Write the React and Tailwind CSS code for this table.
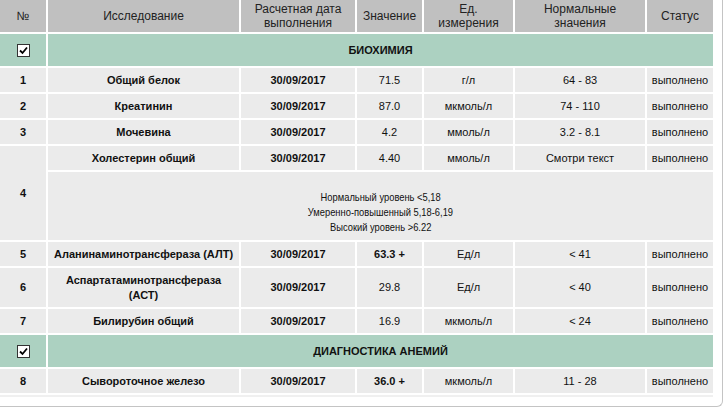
const rows = [
  { n: "1", name: "Общий белок", date: "30/09/2017", value: "71.5", unit: "г/л", norm: "64 - 83" },
  { n: "2", name: "Креатинин", date: "30/09/2017", value: "87.0", unit: "мкмоль/л", norm: "74 - 110" },
  { n: "3", name: "Мочевина", date: "30/09/2017", value: "4.2", unit: "ммоль/л", norm: "3.2 - 8.1" },
];

const rowsAfter = [
  { n: "5", name: "Аланинаминотрансфераза (АЛТ)", date: "30/09/2017", value: "63.3 +", unit: "Ед/л", norm: "< 41", hi: true },
  { n: "6", name: "Аспартатаминотрансфераза (АСТ)", date: "30/09/2017", value: "29.8", unit: "Ед/л", norm: "< 40", tall: true },
  { n: "7", name: "Билирубин общий", date: "30/09/2017", value: "16.9", unit: "мкмоль/л", norm: "< 24" },
];

const cell = "flex items-center justify-center text-center bg-[#ebebeb] text-[11px] text-[#111]";

function Check() {
  return (
    <span className="flex h-[13px] w-[13px] items-center justify-center border border-[#333] bg-white">
      <svg width="9" height="9" viewBox="0 0 9 9">
        <path d="M1 4.5 L3.5 7 L8 1.5" fill="none" stroke="#000" strokeWidth="1.8" />
      </svg>
    </span>
  );
}

function GroupRow({ title }) {
  return (
    <>
      <div className="flex h-[32px] items-center justify-center bg-[#acd1c1]">
        <Check />
      </div>
      <div className="col-span-6 flex items-center justify-center bg-[#acd1c1] text-[11px] font-bold text-[#111]">
        {title}
      </div>
    </>
  );
}

function DataRow({ r }) {
  const h = r.tall ? "h-[39px]" : "h-[24px]";
  return (
    <>
      <div className={`${cell} ${h} font-bold`}>{r.n}</div>
      <div className={`${cell} font-bold px-[6px] leading-[15px] ${r.tall ? "" : "whitespace-nowrap"}`}>{r.name}</div>
      <div className={`${cell} font-bold`}>{r.date}</div>
      <div className={`${cell} ${r.hi ? "font-bold" : ""}`}>{r.value}</div>
      <div className={cell}>{r.unit}</div>
      <div className={cell}>{r.norm}</div>
      <div className={`${cell} text-[11.5px]`}>выполнено</div>
    </>
  );
}

export default function App() {
  const head = "flex items-center justify-center text-center bg-[#c0c0c0] text-[12px] leading-[14px] text-[#222]";
  return (
    <div className="h-[410px] w-[726px] overflow-hidden bg-white" style={{ fontFamily: '"Liberation Sans", Arial, sans-serif' }}>
      <div className="h-[407px] w-[723px] overflow-hidden rounded-br-[6px] border-r border-b border-[#c4c4c4] bg-white">
        <div className="grid w-[713px] grid-cols-[46px_191px_114px_65px_89px_130px_66px] gap-[2px]">
          <div className={`${head} h-[32px]`}>№</div>
          <div className={head}>Исследование</div>
          <div className={head}>Расчетная дата выполнения</div>
          <div className={head}>Значение</div>
          <div className={`${head} px-3`}>Ед. измерения</div>
          <div className={`${head} px-5`}>Нормальные значения</div>
          <div className={head}>Статус</div>

          <GroupRow title="БИОХИМИЯ" />
          {rows.map((r) => (
            <DataRow key={r.n} r={r} />
          ))}

          <div className={`${cell} row-span-2 font-bold`}>4</div>
          <div className={`${cell} h-[24px] font-bold`}>Холестерин общий</div>
          <div className={`${cell} font-bold`}>30/09/2017</div>
          <div className={cell}>4.40</div>
          <div className={cell}>ммоль/л</div>
          <div className={cell}>Смотри текст</div>
          <div className={`${cell} text-[11.5px]`}>выполнено</div>
          <div className="col-span-6 flex h-[68px] flex-col items-center justify-end bg-[#ebebeb] pb-[5px] text-[11px] leading-[15px] text-[#111]">
            <span className="block scale-x-[0.85] whitespace-nowrap">Нормальный уровень &lt;5,18</span>
            <span className="block scale-x-[0.85] whitespace-nowrap">Умеренно-повышенный 5,18-6,19</span>
            <span className="block scale-x-[0.85] whitespace-nowrap">Высокий уровень &gt;6.22</span>
          </div>

          {rowsAfter.map((r) => (
            <DataRow key={r.n} r={r} />
          ))}

          <GroupRow title="ДИАГНОСТИКА АНЕМИЙ" />
          <DataRow r={{ n: "8", name: "Сывороточное железо", date: "30/09/2017", value: "36.0 +", unit: "мкмоль/л", norm: "11 - 28", hi: true }} />
          <div className="col-span-7 h-[2px] bg-[#f0f0f0]" />
        </div>
      </div>
    </div>
  );
}
